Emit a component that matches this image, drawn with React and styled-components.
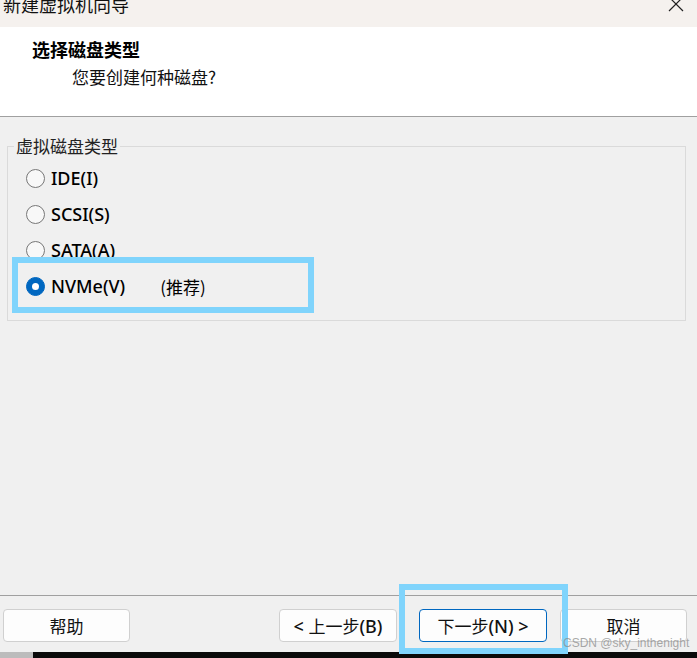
import React from 'react';
import styled, { createGlobalStyle } from 'styled-components';

const GlobalStyle = createGlobalStyle`
  html, body {
    margin: 0;
    padding: 0;
    background: #f0f0f0;
  }
  * { box-sizing: border-box; }
`;

const FONT = `"Noto Sans", "Noto Sans CJK SC", sans-serif`;

const Window = styled.div`
  position: relative;
  width: 697px;
  height: 658px;
  overflow: hidden;
  display: flex;
  flex-direction: column;
  background: #f0f0f0;
  font-family: ${FONT};
  color: #000;
`;

const TitleBar = styled.div`
  height: 27px;
  flex: none;
  display: flex;
  justify-content: space-between;
  align-items: flex-start;
  background: #f5f1ee;
  padding: 0 13px 0 3px;
  overflow: hidden;
`;

const TitleText = styled.div`
  font-size: 18px;
  line-height: 18px;
  margin-top: -5px;
  color: #111;
  font-family: "Noto Sans CJK SC", sans-serif;
`;

const CloseIcon = styled.svg`
  margin-top: -4px;
  width: 16px;
  height: 16px;
`;

const Header = styled.div`
  height: 90px;
  flex: none;
  background: #fff;
  border-bottom: 1px solid #a0a0a0;
  padding: 10px 0 0 32px;
`;

const HeaderTitle = styled.div`
  font-family: "Noto Sans CJK SC", sans-serif;
  font-size: 18px;
  font-weight: bold;
  line-height: 24px;
`;

const HeaderSub = styled.div`
  font-family: "Noto Sans CJK SC", sans-serif;
  font-size: 17px;
  line-height: 24px;
  margin: 4px 0 0 40px;
  color: #111;
`;

const Body = styled.div`
  height: 479px;
  flex: none;
  border-bottom: 1px solid #a0a0a0;
  padding: 19px 11px 0 7px;
`;

const Group = styled.fieldset`
  margin: 0;
  padding: 4px 18px 16px 18px;
  border: 1px solid #dadada;
  min-width: 0;
`;

const Legend = styled.legend`
  font-family: "Noto Sans CJK SC", sans-serif;
  font-size: 17px;
  line-height: 20px;
  padding: 0 2px;
  margin-left: -12px;
  color: #222;
`;

const Row = styled.label`
  height: 36px;
  display: flex;
  align-items: center;
  font-size: 18px;
`;

const Latin = styled.span`
  font-family: "Noto Sans", sans-serif;
  font-size: 18px;
  font-weight: 500;
`;

const Circle = styled.span`
  width: 19px;
  height: 19px;
  border-radius: 50%;
  flex: none;
  display: flex;
  align-items: center;
  justify-content: center;
  background: ${(p) => (p.$checked ? '#0067c0' : '#f8f8f8')};
  border: 1px solid ${(p) => (p.$checked ? '#0067c0' : '#777')};
  margin-right: 6px;

  &::after {
    content: '';
    display: ${(p) => (p.$checked ? 'block' : 'none')};
    width: 7px;
    height: 7px;
    border-radius: 50%;
    background: #fff;
  }
`;

const Note = styled.span`
  margin-left: 35px;
  font-family: "Noto Sans CJK SC", sans-serif;
  font-size: 17px;
`;

const Footer = styled.div`
  height: 56px;
  flex: none;
  display: flex;
  align-items: flex-start;
  padding: 13px 10px 0 3px;
`;

const Spacer = styled.div`
  flex: 1;
`;

const Button = styled.button`
  width: ${(p) => p.$w}px;
  height: 33px;
  margin-left: ${(p) => p.$gap || 0}px;
  background: #fdfdfd;
  border: 1px solid ${(p) => (p.$primary ? '#0067c0' : '#d0d0d0')};
  border-radius: 4px;
  font-family: "Noto Sans CJK SC", sans-serif;
  font-size: 17px;
  color: #111;
  padding: 0;
`;

const Strip = styled.div`
  height: 6px;
  flex: none;
  display: flex;
`;

const StripPart = styled.div`
  width: ${(p) => (p.$w ? `${p.$w}px` : 'auto')};
  flex: ${(p) => (p.$w ? 'none' : 1)};
  background: ${(p) => p.$bg};
`;

const Highlight = styled.div`
  position: absolute;
  border: 6px solid #80d4fc;
  left: ${(p) => p.$x}px;
  top: ${(p) => p.$y}px;
  width: ${(p) => p.$w}px;
  height: ${(p) => p.$h}px;
  pointer-events: none;
`;

const Watermark = styled.div`
  position: absolute;
  left: 563px;
  top: 636px;
  font-family: "Liberation Sans", sans-serif;
  font-size: 12px;
  color: rgba(140, 140, 140, 0.75);
  white-space: nowrap;
`;

const options = [
  { label: 'IDE(I)' },
  { label: 'SCSI(S)' },
  { label: 'SATA(A)' },
  { label: 'NVMe(V)', note: '(推荐)', checked: true },
];

export default function App() {
  return (
    <>
      <GlobalStyle />
      <Window>
        <TitleBar>
          <TitleText>新建虚拟机向导</TitleText>
          <CloseIcon viewBox="0 0 16 16">
            <path d="M1 1 L15 15 M15 1 L1 15" stroke="#222" strokeWidth="1.2" fill="none" />
          </CloseIcon>
        </TitleBar>
        <Header>
          <HeaderTitle>选择磁盘类型</HeaderTitle>
          <HeaderSub>您要创建何种磁盘?</HeaderSub>
        </Header>
        <Body>
          <Group>
            <Legend>虚拟磁盘类型</Legend>
            {options.map((o) => (
              <Row key={o.label}>
                <Circle $checked={o.checked} />
                <Latin>{o.label}</Latin>
                {o.note && <Note>{o.note}</Note>}
              </Row>
            ))}
          </Group>
        </Body>
        <Footer>
          <Button $w={127}>帮助</Button>
          <Spacer />
          <Button $w={118}>
            <Latin>&lt; </Latin>上一步<Latin>(B)</Latin>
          </Button>
          <Button $w={128} $gap={22} $primary>
            下一步<Latin>(N) &gt;</Latin>
          </Button>
          <Button $w={127} $gap={13}>取消</Button>
        </Footer>
        <Strip>
          <StripPart $w={33} $bg="#bcbcbc" />
          <StripPart $bg="#0a0a0a" />
        </Strip>
        <Highlight $x={12} $y={257} $w={302} $h={56} />
        <Highlight $x={399} $y={584} $w={169} $h={70} />
        <Watermark>CSDN @sky_inthenight</Watermark>
      </Window>
    </>
  );
}
